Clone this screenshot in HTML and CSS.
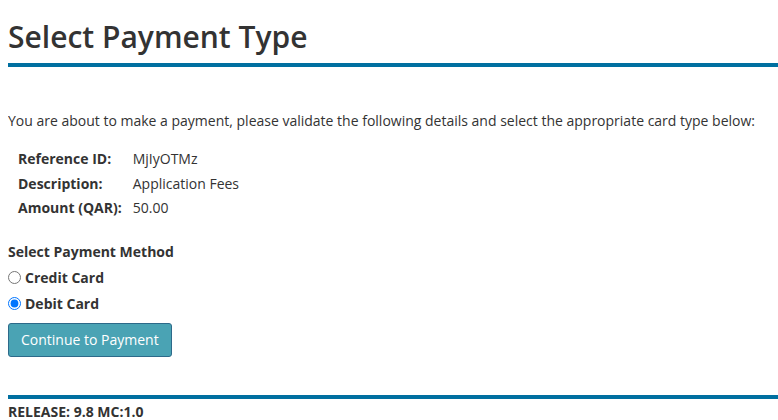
FILE: index.html
```html
<!DOCTYPE html>
<html lang="en">
<head>
    <meta charset="UTF-8">
    <meta name="viewport" content="width=device-width, initial-scale=1.0">
    <title>Select Payment Type</title>
    <link rel="stylesheet" href="styles.css">
</head>
<body>

    <!-- Cabeçalho -->
    <h1 class="titulo">Select Payment Type</h1>

    <p class="intro">You are about to make a payment, please validate the following details and select the appropriate card type below:</p>

    <!-- Detalhes do pagamento -->
    <table class="detalhes">
        <tr>
            <th>Reference ID:</th>
            <td>MjIyOTMz</td>
        </tr>
        <tr>
            <th>Description:</th>
            <td>Application Fees</td>
        </tr>
        <tr>
            <th>Amount (QAR):</th>
            <td>50.00</td>
        </tr>
    </table>

    <!-- Método de pagamento -->
    <div class="metodo">
        <div class="metodo-titulo">Select Payment Method</div>
        <label class="opcao"><input type="radio" name="cardType" value="credit"> Credit Card</label>
        <label class="opcao"><input type="radio" name="cardType" value="debit" checked> Debit Card</label>
        <button class="btn-continuar">Continue to Payment</button>
    </div>

    <div class="rodape">RELEASE: 9.8 MC:1.0</div>

</body>
</html>
```

FILE: styles.css
```css
body {
    font-family: 'Open Sans', 'Liberation Sans', sans-serif;
    font-size: 14px;
    color: #333;
    background-color: #fff;
    margin: 0 0 0 8px;
    padding: 0;
}

/* Título */
.titulo {
    margin: 0;
    padding-top: 18px;
    padding-bottom: 7px;
    font-size: 30px;
    font-weight: 600;
    line-height: 38px;
    color: #333;
    border-bottom: 4px solid #006fa0;
}

.intro {
    margin: 44px 0 16px 0;
    line-height: 20px;
}

/* Tabela de detalhes */
.detalhes {
    border-collapse: collapse;
    margin-left: 6px;
}

.detalhes th,
.detalhes td {
    text-align: left;
    padding: 2px 4px;
    line-height: 20.5px;
}

.detalhes th {
    font-weight: bold;
    padding-right: 7px;
}

/* Método de pagamento */
.metodo {
    margin-top: 21px;
}

.metodo-titulo {
    font-weight: bold;
    line-height: 20px;
    margin-bottom: 6px;
}

.opcao {
    display: flex;
    align-items: center;
    font-weight: bold;
    line-height: 20px;
    margin-bottom: 6px;
}

.opcao input {
    margin: 0 4px 0 0;
    width: 13px;
    height: 13px;
}

.btn-continuar {
    margin-top: 3px;
    background-color: #4aa3b4;
    color: #fff;
    border: 1px solid #2d6a8a;
    border-radius: 3px;
    padding: 6px 12px;
    font-family: inherit;
    font-size: 14px;
    line-height: 20px;
    cursor: pointer;
}

/* Rodapé */
.rodape {
    margin-top: 38px;
    border-top: 4px solid #006fa0;
    padding-top: 3px;
    font-weight: bold;
    font-size: 14px;
    line-height: 20px;
}
```
